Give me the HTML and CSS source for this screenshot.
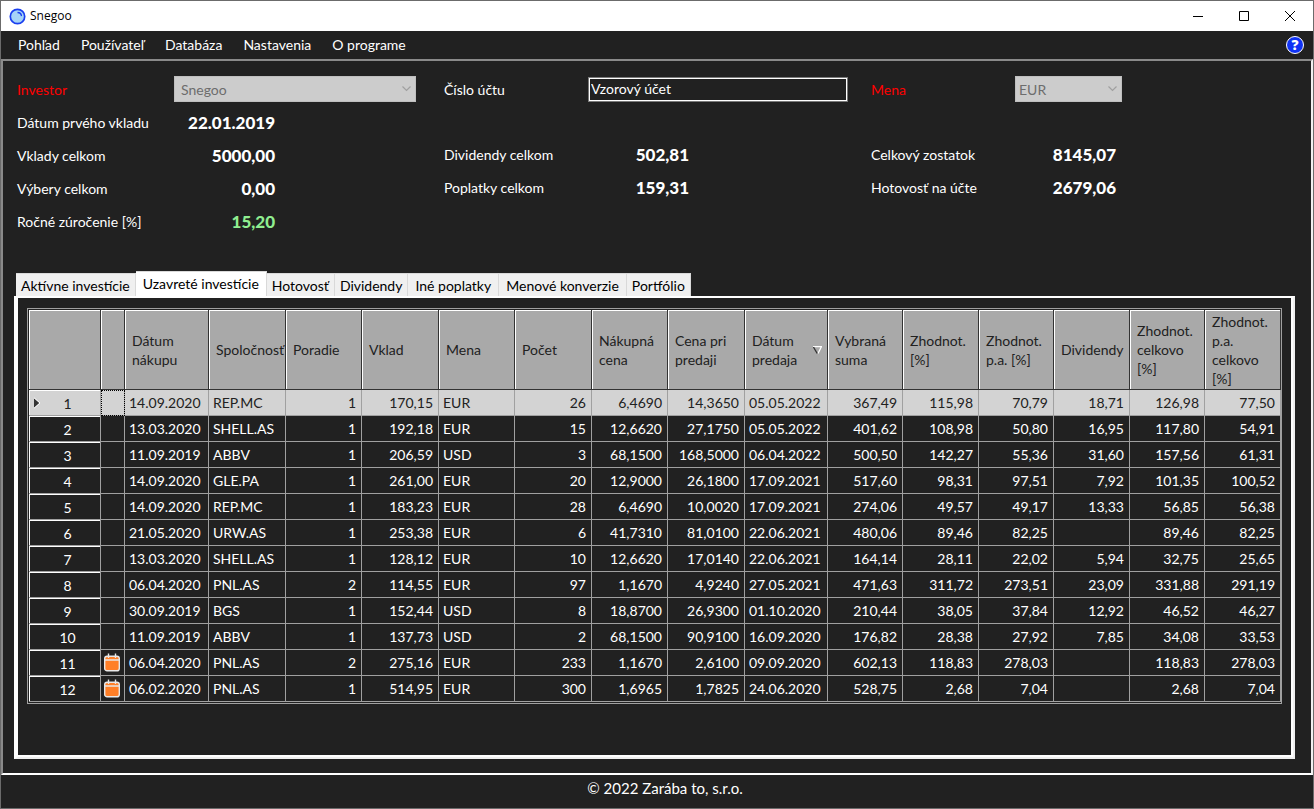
FILE: index.html
```
<!DOCTYPE html>
<html lang="sk">
<head>
    <meta charset="UTF-8">
    <meta name="viewport" content="width=device-width, initial-scale=1.0">
    <title>Snegoo</title>
    <link rel="stylesheet" href="styles.css">
</head>
<body>
    <div class="window">
        <header class="titlebar">
            <svg class="logo" width="17" height="17" viewBox="0 0 17 17">
                <circle cx="8.5" cy="8.5" r="7.2" fill="#a6d4f7" stroke="#1a3ff0" stroke-width="1.7"/>
                <path d="M8.5 4.5a4 4 0 0 1 4 3.6" fill="none" stroke="#1a3ff0" stroke-width="1.3"/>
            </svg>
            <h1>Snegoo</h1>
            <div class="window-buttons">
                <button type="button" aria-label="Minimalizovať">
                    <svg width="10" height="10" viewBox="0 0 10 10"><path d="M0 5.5h10"/></svg>
                </button>
                <button type="button" aria-label="Maximalizovať">
                    <svg width="10" height="10" viewBox="0 0 10 10"><path d="M.5.5h9v9h-9z"/></svg>
                </button>
                <button type="button" aria-label="Zavrieť">
                    <svg width="10" height="10" viewBox="0 0 10 10"><path d="M0 0l10 10M10 0L0 10"/></svg>
                </button>
            </div>
        </header>

        <nav class="menu">
            <button type="button">Pohľad</button>
            <button type="button">Používateľ</button>
            <button type="button">Databáza</button>
            <button type="button">Nastavenia</button>
            <button type="button">O programe</button>
            <button type="button" class="help" aria-label="Pomocník">?</button>
        </nav>

        <main class="panel">
            <section class="summary">
                <div class="summary-col">
                    <div class="field">
                        <label class="required" for="investor">Investor</label>
                        <select id="investor" class="investor" disabled><option>Snegoo</option></select>
                    </div>
                    <div class="row"><span>Dátum prvého vkladu</span><strong>22.01.2019</strong></div>
                    <div class="row"><span>Vklady celkom</span><strong>5000,00</strong></div>
                    <div class="row"><span>Výbery celkom</span><strong>0,00</strong></div>
                    <div class="row"><span>Ročné zúročenie [%]</span><strong class="positive">15,20</strong></div>
                </div>
                <div class="summary-col middle">
                    <div class="field">
                        <label for="account">Číslo účtu</label>
                        <input id="account" class="account" type="text" value="Vzorový účet">
                    </div>
                    <div class="row"><span>Dividendy celkom</span><strong>502,81</strong></div>
                    <div class="row"><span>Poplatky celkom</span><strong>159,31</strong></div>
                </div>
                <div class="summary-col last">
                    <div class="field">
                        <label class="required" for="currency">Mena</label>
                        <select id="currency" class="currency" disabled><option>EUR</option></select>
                    </div>
                    <div class="row"><span>Celkový zostatok</span><strong>8145,07</strong></div>
                    <div class="row"><span>Hotovosť na účte</span><strong>2679,06</strong></div>
                </div>
            </section>

            <div class="tabs" role="tablist">
                <button type="button" role="tab">Aktívne investície</button>
                <button type="button" role="tab" class="active" aria-selected="true">Uzavreté investície</button>
                <button type="button" role="tab">Hotovosť</button>
                <button type="button" role="tab">Dividendy</button>
                <button type="button" role="tab" class="wide">Iné poplatky</button>
                <button type="button" role="tab" class="wide">Menové konverzie</button>
                <button type="button" role="tab">Portfólio</button>
            </div>

            <div class="tab-page">
                <div class="grid">
                    <table>
                        <colgroup>
                            <col class="w-number"><col class="w-icon"><col class="w-date">
                            <col class="w-77"><col class="w-76"><col class="w-77"><col class="w-76">
                            <col class="w-77"><col class="w-76"><col class="w-77">
                            <col class="w-sale"><col class="w-75"><col class="w-76"><col class="w-75">
                            <col class="w-76"><col class="w-75"><col class="w-76">
                        </colgroup>
                        <thead>
                            <tr>
                                <th></th>
                                <th></th>
                                <th>Dátum nákupu</th>
                                <th>Spoločnosť</th>
                                <th>Poradie</th>
                                <th>Vklad</th>
                                <th>Mena</th>
                                <th>Počet</th>
                                <th>Nákupná cena</th>
                                <th>Cena pri predaji</th>
                                <th>
                                    <div class="sorted">Dátum predaja
                                        <svg width="9" height="8" viewBox="0 0 9 8"><path d="M0 .5h8.5L5 7.5" fill="none" stroke="#fff" stroke-width="1.3"/><path d="M.5 1l3.7 6.5" fill="none" stroke="#333" stroke-width="1.3"/></svg>
                                    </div>
                                </th>
                                <th>Vybraná suma</th>
                                <th>Zhodnot. [%]</th>
                                <th>Zhodnot. p.a. [%]</th>
                                <th>Dividendy</th>
                                <th>Zhodnot. celkovo [%]</th>
                                <th>Zhodnot. p.a. celkovo [%]</th>
                            </tr>
                        </thead>
                        <tbody id="rows"></tbody>
                    </table>
                </div>
            </div>
        </main>

        <footer class="footer">© 2022 Zarába to, s.r.o.</footer>
    </div>
    <script src="script.js"></script>
</body>
</html>
```
FILE: styles.css
```
* {
    margin: 0;
    padding: 0;
    box-sizing: border-box;
}

body {
    font-family: Lato, sans-serif;
    font-size: 14px;
    color: #ffffff;
    background: #212121;
}

button, input, select {
    font: inherit;
    color: inherit;
    background: none;
    border: none;
}

.window {
    display: flex;
    flex-direction: column;
    min-height: 100vh;
    border: 1px solid #6b6b6b;
}

/* Title bar */
.titlebar {
    display: flex;
    align-items: center;
    height: 30px;
    padding-left: 8px;
    background: #ffffff;
    color: #000000;
}

.titlebar h1 {
    margin-left: 4px;
    padding-bottom: 1px;
    font: 12px "Open Sans", sans-serif;
}

.window-buttons {
    display: flex;
    margin-left: auto;
}

.window-buttons button {
    display: flex;
    align-items: center;
    justify-content: center;
    width: 46px;
    height: 30px;
}

.window-buttons path {
    fill: none;
    stroke: #000000;
}

/* Menu */
.menu {
    display: flex;
    align-items: center;
    gap: 21px;
    height: 28px;
    padding: 0 9px 1px 17px;
}

.menu .help {
    width: 18px;
    height: 18px;
    margin-left: auto;
    border: 1px solid #ffffff;
    border-radius: 50%;
    background: #1033f5;
    font-family: "Open Sans", sans-serif;
    font-weight: 800;
    line-height: 16px;
}

.panel {
    flex: 1;
    display: flex;
    flex-direction: column;
    padding: 14px 16px 14px 11px;
    border: 2px solid;
    border-color: #8a8a8a #f0f0f0 #ffffff #8a8a8a;
}

/* Summary */
.summary {
    display: grid;
    grid-template-columns: 427fr 427fr 424fr;
    padding: 0 0 33px 3px;
}

.field {
    display: flex;
    align-items: center;
    height: 28px;
    margin-bottom: 3px;
}

.field label {
    flex: none;
    width: 157px;
}

.middle .field label,
.last .field label {
    width: 144px;
}

.middle .row:nth-child(2),
.last .row:nth-child(2) {
    margin-top: 35px;
}

.required {
    color: #ff0000;
}

.field select {
    height: 26px;
    padding: 0 6px;
    appearance: none;
    color: #6d6d6d;
    opacity: 1;
    border: 1px solid #bfbfbf;
    background: #cccccc url("data:image/svg+xml,%3Csvg xmlns='http://www.w3.org/2000/svg' width='9' height='6'%3E%3Cpath d='M.5.5l4 4 4-4' fill='none' stroke='%23a0a0a0' stroke-width='1.2'/%3E%3C/svg%3E") no-repeat right 4px center;
}

.field .investor {
    width: 242px;
}

.field .currency {
    width: 107px;
    padding: 0 3px;
}

.account {
    width: 260px;
    height: 25px;
    padding: 0 2px 2px;
    border: 1px solid #7a7a7a;
    box-shadow: inset 0 0 0 1px #ffffff;
    outline: none;
}

.row {
    display: flex;
    align-items: center;
    justify-content: space-between;
    width: 258px;
    height: 33px;
}

.middle .row,
.last .row {
    width: 245px;
}

.row strong {
    font-size: 17px;
    font-weight: 900;
}

.positive {
    color: #90ee90;
}

/* Tabs */
.tabs {
    display: flex;
    align-items: flex-end;
    height: 25px;
    padding-left: 2px;
}

.tabs button {
    height: 23px;
    padding: 0 5px;
    border: 1px solid #d9d9d9;
    border-width: 1px 1px 0 0;
    background: #f0f0f0;
    color: #000000;
    white-space: nowrap;
}

.tabs .active {
    height: 25px;
    padding: 0 7px 2px;
    background: #ffffff;
}

.tabs .wide {
    padding: 0 7px;
}

.tab-page {
    flex: 1;
    padding: 10px 11px 10px 9px;
    border: solid #ffffff;
    border-width: 2px 2px 2px 4px;
    border-right-color: #f0f0f0;
    border-bottom-color: #f0f0f0;
    box-shadow: inset -2px -2px #ffffff;
}

/* Grid */
.grid {
    padding: 1px 0 1px 1px;
    border: 1px solid #a0a0a0;
}

table {
    width: 100%;
    table-layout: fixed;
    border-collapse: separate;
    border-spacing: 0;
}

.w-number {
    width: 72px;
}

.w-icon {
    width: 24px;
}

.w-date {
    width: 84px;
}

.w-sale {
    width: 83px;
}

.w-75 {
    width: 75px;
}

.w-76 {
    width: 76px;
}

.w-77 {
    width: 77px;
}

th {
    height: 80px;
    padding: 0 1px 0 7px;
    overflow: hidden;
    background: #a9a9a9;
    border: 1px solid #333333;
    border-width: 0 1px 1px 0;
    box-shadow: inset 1px 1px #ffffff;
    color: #212121;
    font-weight: normal;
    line-height: 19px;
    text-align: left;
}

.sorted {
    display: flex;
    align-items: center;
    justify-content: space-between;
    padding-right: 4px;
}

.sorted svg {
    flex: none;
}

td {
    height: 26px;
    padding: 0 5px 0 4px;
    border: 1px solid #a0a0a0;
    border-width: 0 1px 1px 0;
    line-height: 25px;
    white-space: nowrap;
}

.num {
    text-align: right;
}

.row-number {
    padding: 2px 0 0 6px;
    line-height: 23px;
    text-align: center;
    box-shadow: inset 1px 1px #ffffff;
}

.row-icon {
    padding: 0;
    text-align: center;
}

.row-icon svg {
    display: block;
    margin: 0 auto;
}

.selected td {
    background: #d3d3d3;
    color: #212121;
}

.selected .row-icon {
    outline: 1px dotted #000000;
    outline-offset: -1px;
}

.marker {
    float: left;
    margin: 5px -6px 0 -2px;
}

/* Footer */
.footer {
    height: 33px;
    padding-left: 16px;
    font-size: 15px;
    line-height: 26px;
    text-align: center;
}
```
FILE: script.js
```
const data = [
    ['', '14.09.2020', 'REP.MC', '1', '170,15', 'EUR', '26', '6,4690', '14,3650', '05.05.2022', '367,49', '115,98', '70,79', '18,71', '126,98', '77,50'],
    ['', '13.03.2020', 'SHELL.AS', '1', '192,18', 'EUR', '15', '12,6620', '27,1750', '05.05.2022', '401,62', '108,98', '50,80', '16,95', '117,80', '54,91'],
    ['', '11.09.2019', 'ABBV', '1', '206,59', 'USD', '3', '68,1500', '168,5000', '06.04.2022', '500,50', '142,27', '55,36', '31,60', '157,56', '61,31'],
    ['', '14.09.2020', 'GLE.PA', '1', '261,00', 'EUR', '20', '12,9000', '26,1800', '17.09.2021', '517,60', '98,31', '97,51', '7,92', '101,35', '100,52'],
    ['', '14.09.2020', 'REP.MC', '1', '183,23', 'EUR', '28', '6,4690', '10,0020', '17.09.2021', '274,06', '49,57', '49,17', '13,33', '56,85', '56,38'],
    ['', '21.05.2020', 'URW.AS', '1', '253,38', 'EUR', '6', '41,7310', '81,0100', '22.06.2021', '480,06', '89,46', '82,25', '', '89,46', '82,25'],
    ['', '13.03.2020', 'SHELL.AS', '1', '128,12', 'EUR', '10', '12,6620', '17,0140', '22.06.2021', '164,14', '28,11', '22,02', '5,94', '32,75', '25,65'],
    ['', '06.04.2020', 'PNL.AS', '2', '114,55', 'EUR', '97', '1,1670', '4,9240', '27.05.2021', '471,63', '311,72', '273,51', '23,09', '331,88', '291,19'],
    ['', '30.09.2019', 'BGS', '1', '152,44', 'USD', '8', '18,8700', '26,9300', '01.10.2020', '210,44', '38,05', '37,84', '12,92', '46,52', '46,27'],
    ['', '11.09.2019', 'ABBV', '1', '137,73', 'USD', '2', '68,1500', '90,9100', '16.09.2020', '176,82', '28,38', '27,92', '7,85', '34,08', '33,53'],
    ['calendar', '06.04.2020', 'PNL.AS', '2', '275,16', 'EUR', '233', '1,1670', '2,6100', '09.09.2020', '602,13', '118,83', '278,03', '', '118,83', '278,03'],
    ['calendar', '06.02.2020', 'PNL.AS', '1', '514,95', 'EUR', '300', '1,6965', '1,7825', '24.06.2020', '528,75', '2,68', '7,04', '', '2,68', '7,04']
];

const calendar = '<svg width="17" height="20" viewBox="0 0 17 20">' +
    '<rect x=".7" y="3.2" width="14.6" height="14.6" rx="2.4" fill="#ff7f27" stroke="#e8e8e8" stroke-width="1.4"/>' +
    '<path d="M1 7h14M4.5 .5v4.5M11.5 .5v4.5" fill="none" stroke="#e8e8e8" stroke-width="1.4"/></svg>';
const marker = '<svg class="marker" width="8" height="12" viewBox="0 0 8 12">' +
    '<path d="M1 1v10l5.5-5z" fill="#333"/><path d="M1 11.2l6-5.2L1 .8" fill="none" stroke="#fff"/></svg>';

// date, company, currency and sale date are left aligned
const leftColumns = [1, 2, 5, 9];

document.getElementById('rows').innerHTML = data.map((row, i) => {
    const cells = row.map((value, col) => {
        if (col === 0) {
            return `<td class="row-icon">${value ? calendar : ''}</td>`;
        }
        return `<td class="${leftColumns.includes(col) ? 'text' : 'num'}">${value}</td>`;
    }).join('');
    return `<tr class="${i === 0 ? 'selected' : ''}"><td class="row-number">${i === 0 ? marker : ''}${i + 1}</td>${cells}</tr>`;
}).join('');
```
